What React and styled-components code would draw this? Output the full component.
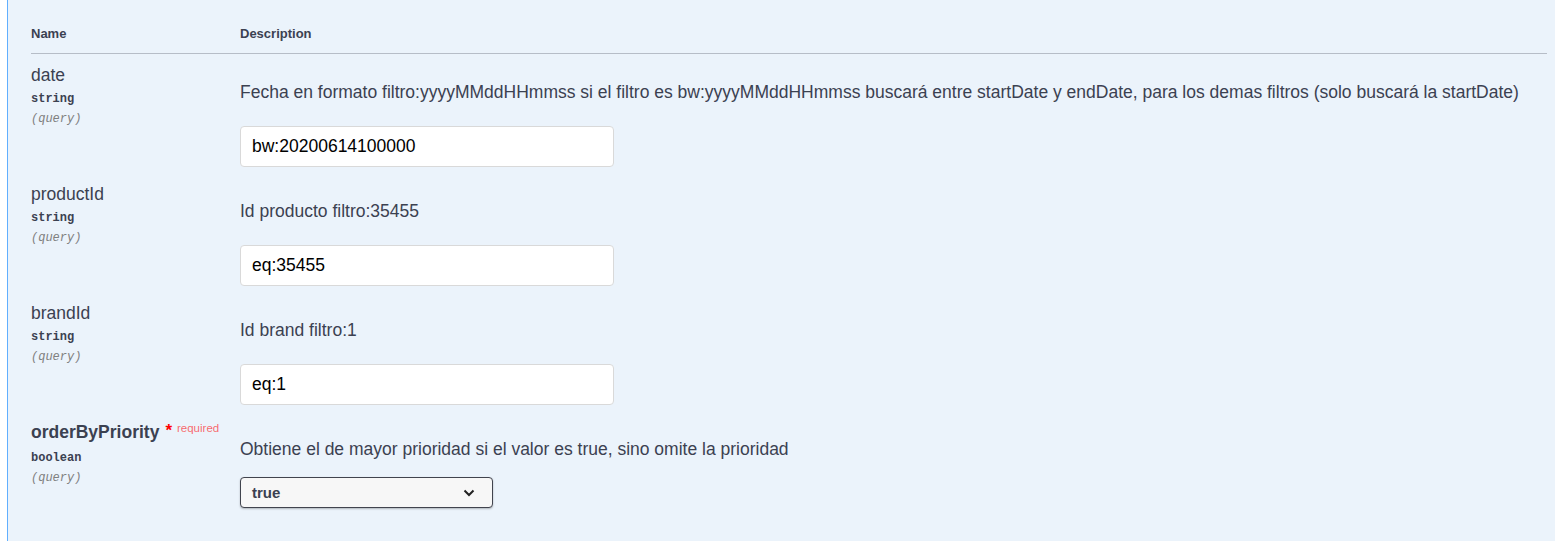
import styled, { createGlobalStyle } from "styled-components"

const GlobalStyle = createGlobalStyle`
  html, body {
    margin: 0;
    padding: 0;
    background: #ffffff;
    overflow: hidden;
  }
  body {
    font-family: "Liberation Sans", Arial, sans-serif;
    color: #3b4151;
  }
`

const Page = styled.div`
  padding-left: 7px;
  height: 541px;
`

const Block = styled.div`
  background: #ebf3fb;
  border-left: 1px solid #61affe;
  height: 100%;
  padding: 14px 8px 0 23px;
  box-sizing: border-box;
`

const Table = styled.div`
  display: flex;
  flex-direction: column;
`

const Row = styled.div`
  display: grid;
  grid-template-columns: 209px 1fr;
  padding: ${p => (p.$head ? "12px 0 12px" : "10px 0 6px")};
  border-bottom: ${p => (p.$head ? "1px solid rgba(59, 65, 81, 0.3)" : "none")};
`

const HeadCell = styled.div`
  font-size: 13px;
  font-weight: 700;
  line-height: 15px;
`

const NameCell = styled.div`
  display: flex;
  flex-direction: column;
`

const ParamName = styled.div`
  font-size: 17.5px;
  line-height: 22px;
  font-weight: ${p => (p.$required ? 700 : 400)};
  white-space: nowrap;
`

const Star = styled.span`
  color: red;
  font-size: 17px;
  position: relative;
  top: -2px;
  margin-left: 6px;
`

const Required = styled.span`
  color: rgba(255, 0, 0, 0.6);
  font-size: 11.5px;
  font-weight: 400;
  position: relative;
  top: -6px;
  margin-left: 5px;
`

const Type = styled.div`
  font-family: "Liberation Mono", "DejaVu Sans Mono", monospace;
  font-size: 12px;
  font-weight: 600;
  line-height: 15px;
  padding: 6px 0 5px;
`

const In = styled.div`
  font-family: "Liberation Mono", "DejaVu Sans Mono", monospace;
  font-size: 12px;
  font-style: italic;
  line-height: 15px;
  color: #808080;
`

const DescCell = styled.div`
  display: flex;
  flex-direction: column;
  align-items: flex-start;
`

const Desc = styled.p`
  margin: 17px 0 ${p => (p.$tight ? "17px" : "23px")};
  font-size: 17.5px;
  line-height: 22px;
  white-space: nowrap;
`

const Input = styled.input`
  width: 374px;
  height: 41px;
  box-sizing: border-box;
  border: 1px solid #d9d9d9;
  border-radius: 4px;
  background: #fff;
  padding: 8px 11px;
  font-family: "Liberation Sans", Arial, sans-serif;
  font-size: 17.5px;
  color: #000;
  outline: none;
`

const SelectBox = styled.div`
  width: 253px;
  height: 31px;
  box-sizing: border-box;
  border: 1px solid #41444e;
  border-radius: 4px;
  background: #f7f7f7;
  box-shadow: 0 1px 2px 0 rgba(0, 0, 0, 0.25);
  display: flex;
  align-items: center;
  justify-content: space-between;
  padding: 0 17px 0 11px;
  font-size: 15px;
  font-weight: 700;
  color: #3b4151;
`

const params = [
  {
    name: "date",
    type: "string",
    desc: "Fecha en formato filtro:yyyyMMddHHmmss si el filtro es bw:yyyyMMddHHmmss buscará entre startDate y endDate, para los demas filtros (solo buscará la startDate)",
    value: "bw:20200614100000",
  },
  { name: "productId", type: "string", desc: "Id producto filtro:35455", value: "eq:35455" },
  { name: "brandId", type: "string", desc: "Id brand filtro:1", value: "eq:1" },
]

const Chevron = () => (
  <svg width="12" height="8" viewBox="0 0 12 8">
    <path d="M1.5 1.5 L6 6 L10.5 1.5" fill="none" stroke="#222" strokeWidth="2" />
  </svg>
)

const App = () => {
  return (
    <Page>
      <GlobalStyle />
      <Block>
        <Table>
          <Row $head>
            <HeadCell>Name</HeadCell>
            <HeadCell>Description</HeadCell>
          </Row>
          {params.map(p => (
            <Row key={p.name}>
              <NameCell>
                <ParamName>{p.name}</ParamName>
                <Type>{p.type}</Type>
                <In>(query)</In>
              </NameCell>
              <DescCell>
                <Desc>{p.desc}</Desc>
                <Input defaultValue={p.value} />
              </DescCell>
            </Row>
          ))}
          <Row>
            <NameCell>
              <ParamName $required>
                orderByPriority<Star>*</Star>
                <Required>required</Required>
              </ParamName>
              <Type>boolean</Type>
              <In>(query)</In>
            </NameCell>
            <DescCell>
              <Desc $tight>Obtiene el de mayor prioridad si el valor es true, sino omite la prioridad</Desc>
              <SelectBox>
                <span>true</span>
                <Chevron />
              </SelectBox>
            </DescCell>
          </Row>
        </Table>
      </Block>
    </Page>
  )
}

export default App
